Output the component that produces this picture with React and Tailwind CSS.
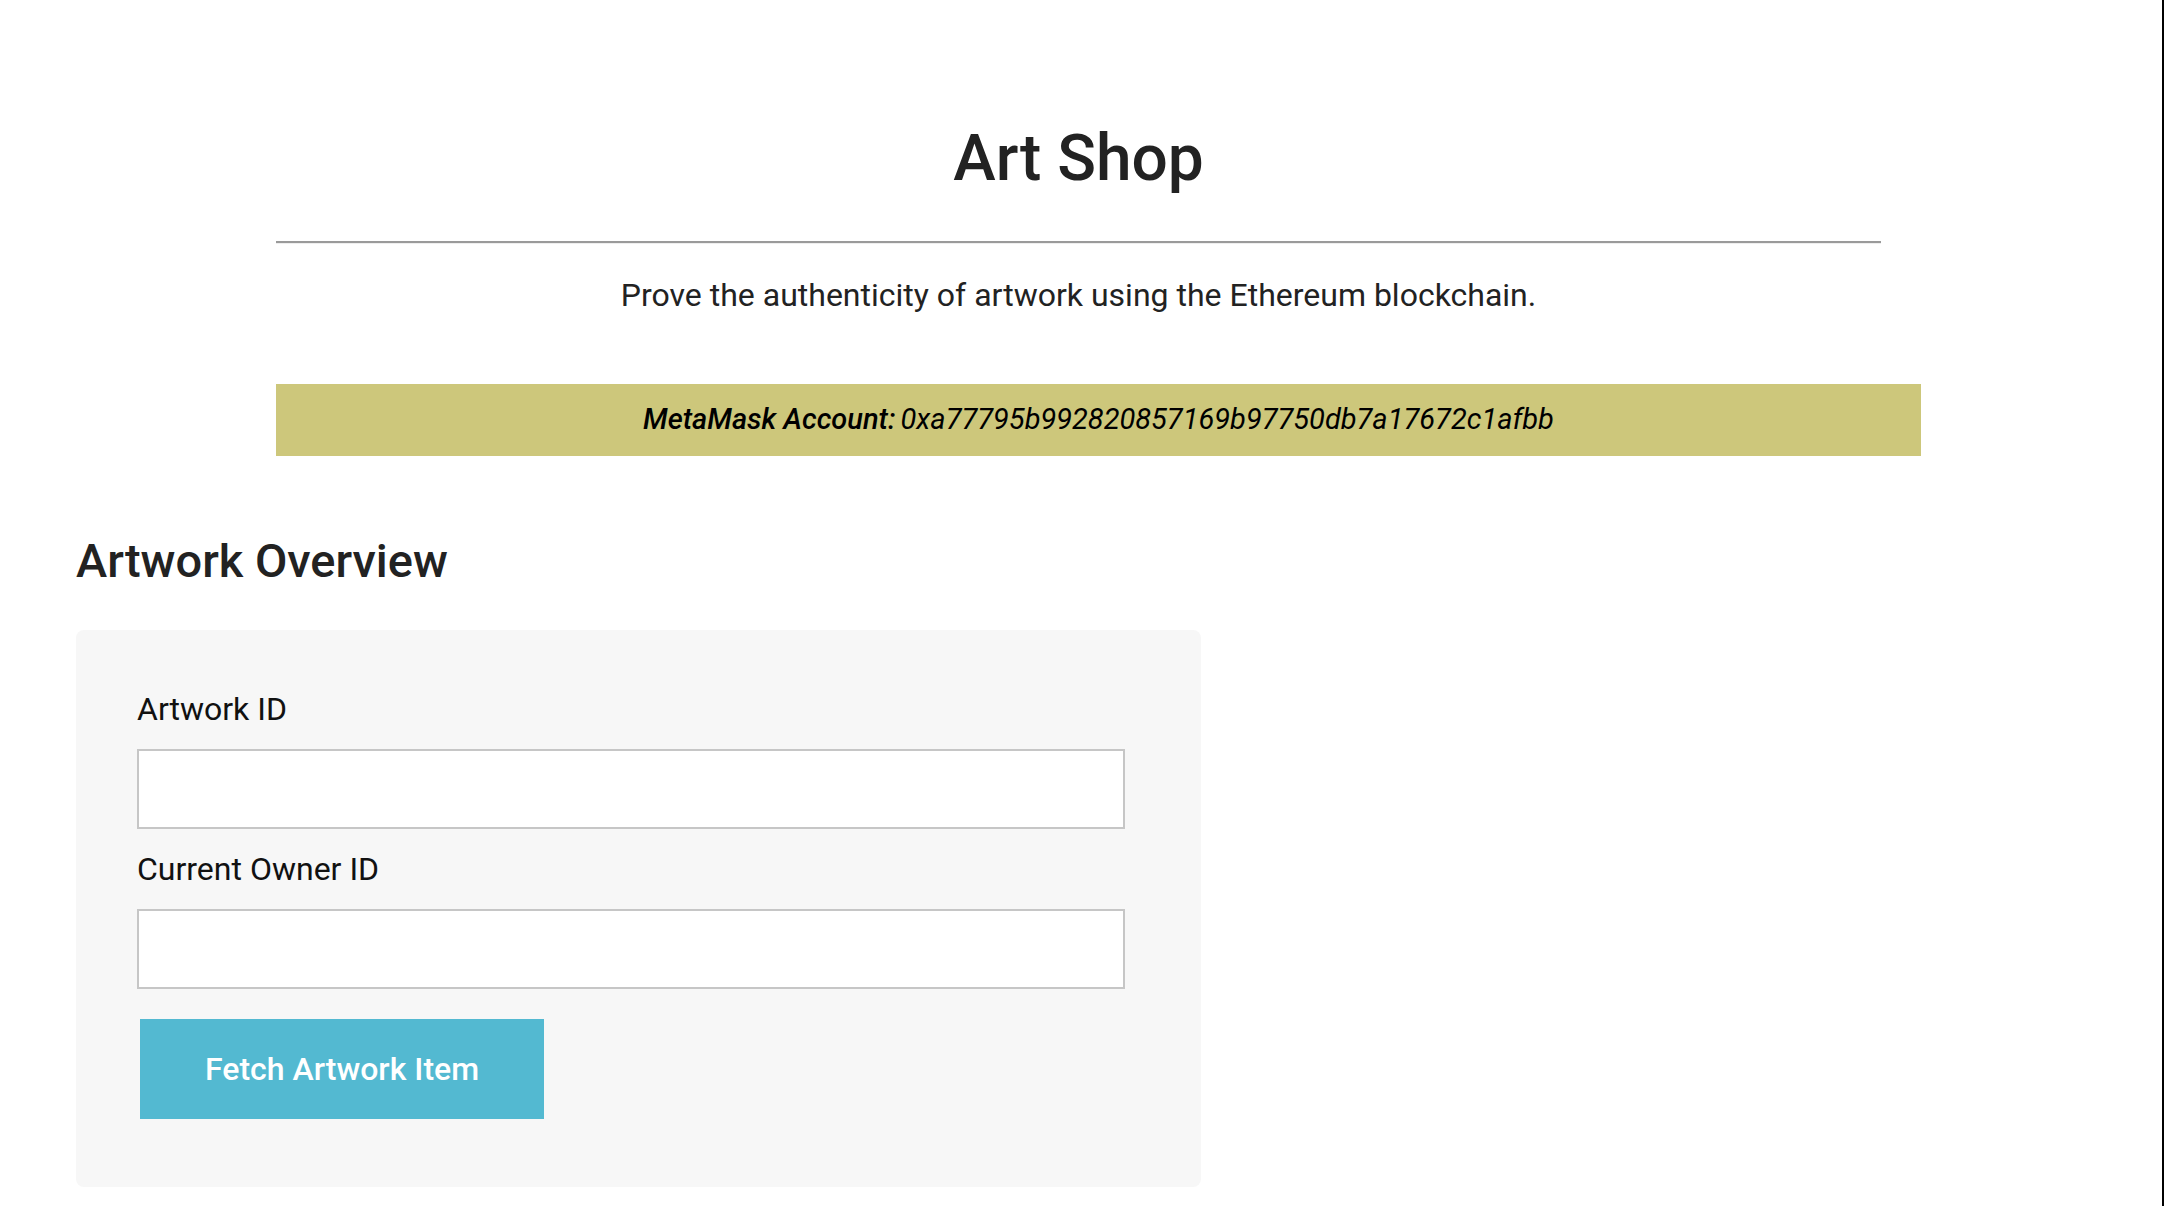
import React from 'react';

const Field = ({ label, last }) => (
  <div className={last ? 'mb-[30px]' : 'mb-[20px]'}>
    <label className="block text-[32px] leading-[40px] text-[#111] mb-[20px]">{label}</label>
    <input
      type="text"
      className="block w-[988px] h-[80px] bg-white border-2 border-[#c6c6c6] px-4 text-[28px] outline-none"
    />
  </div>
);

export default function App() {
  return (
    <div className="flex h-[1206px] overflow-hidden bg-white font-['Roboto',sans-serif] text-[#222]">
      <div className="flex-1">
        {/* Header */}
        <div className="ml-[276px] w-[1605px] pt-[119px]">
          <h1 className="text-center text-[64px] leading-[80px] font-medium">Art Shop</h1>
          <hr className="mt-[42px] border-0 border-t-2 border-[#9a9a9a] border-b border-b-[#eeeeee]" />
          <p className="mt-[32px] text-center text-[32px] leading-[38px]">
            Prove the authenticity of artwork using the Ethereum blockchain.
          </p>
          <div className="mt-[70px] w-[1645px] h-[72px] bg-[#cdc77b] flex items-center justify-center text-[29px] italic text-black">
            <span className="font-medium">MetaMask Account:</span>
            <span className="ml-[5px]">0xa77795b992820857169b97750db7a17672c1afbb</span>
          </div>
        </div>

        {/* Overview */}
        <div className="pl-[76px] pt-[78px]">
          <h2 className="text-[47px] leading-[54px] font-medium">Artwork Overview</h2>
          <div className="mt-[42px] w-[1125px] bg-[#f7f7f7] rounded-lg pt-[59px] pb-[68px] pl-[61px]">
            <Field label="Artwork ID" />
            <Field label="Current Owner ID" last />
            <button className="ml-[3px] w-[404px] h-[100px] bg-[#53b9d1] text-white text-[32px] font-medium">
              Fetch Artwork Item
            </button>
          </div>
        </div>
      </div>
      <div className="w-[2px] bg-black" />
    </div>
  );
}
